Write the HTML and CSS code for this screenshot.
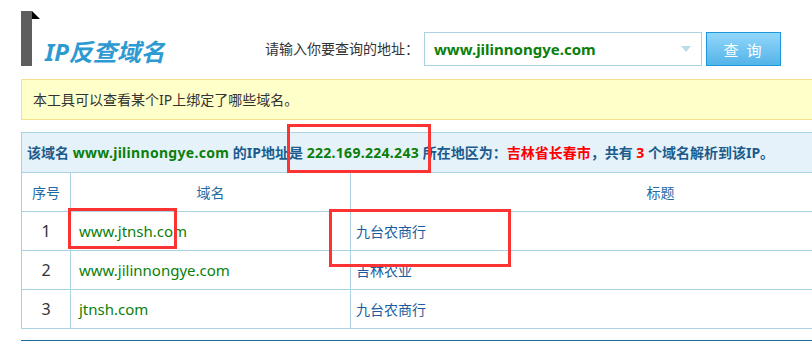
FILE: index.html
```html
<!DOCTYPE html>
<html lang="zh-CN">
<head>
    <meta charset="UTF-8">
    <meta name="viewport" content="width=device-width, initial-scale=1.0">
    <title>IP反查域名</title>
    <link rel="stylesheet" href="styles.css">
</head>
<body>
    <div class="page">
        <div class="header">
            <div class="logo">
                <span class="logo-bar"></span>
                <h1>IP反查域名</h1>
            </div>
            <form class="search">
                <label for="domain">请输入你要查询的地址：</label>
                <div class="combo">
                    <input type="text" id="domain" value="www.jilinnongye.com">
                    <span class="arrow"></span>
                </div>
                <button type="button">查 询</button>
            </form>
        </div>
        <div class="notice">本工具可以查看某个IP上绑定了哪些域名。</div>
        <div class="summary">
            该域名 <span class="green">www.jilinnongye.com</span> 的IP地址是 <span class="green">222.169.224.243</span> 所在地区为：<span class="red">吉林省长春市</span>，共有 <span class="red">3</span> 个域名解析到该IP。
        </div>
        <table class="result">
            <thead>
                <tr><th class="col-no">序号</th><th class="col-domain">域名</th><th>标题</th></tr>
            </thead>
            <tbody>
                <tr><td class="no">1</td><td class="domain">www.jtnsh.com</td><td class="title">九台农商行</td></tr>
                <tr><td class="no">2</td><td class="domain">www.jilinnongye.com</td><td class="title">吉林农业</td></tr>
                <tr><td class="no">3</td><td class="domain">jtnsh.com</td><td class="title">九台农商行</td></tr>
            </tbody>
        </table>
        <div class="footer-line"></div>

        <span class="mark mark-ip"></span>
        <span class="mark mark-domain"></span>
        <span class="mark mark-title"></span>
    </div>
</body>
</html>
```

FILE: styles.css
```css
html, body { overflow: hidden; }
body { margin: 0; padding: 0; background: #fff; font-family: "Noto Sans", "Noto Sans CJK SC", sans-serif; font-size: 14px; color: #333; }
.page { position: relative; width: 950px; margin-left: 21px; }

.header { display: flex; align-items: flex-start; height: 79px; }
.logo { display: flex; align-items: flex-end; padding-top: 11px; width: 244px; }
.logo-bar { position: relative; width: 11px; height: 55px; background: #5e5e5e; }
.logo-bar::after { content: ""; position: absolute; top: 0; left: 11px; border-left: 8px solid #000; border-top: 8px solid transparent; }
.logo h1 { margin: 0 0 0 13px; font-size: 24px; line-height: 28px; font-weight: bold; font-style: italic; color: #2e9ad2; }

.search { display: flex; align-items: center; margin-top: 32px; }
.search label { width: 159px; font-size: 14px; line-height: 34px; color: #333; }
.combo { position: relative; }
.combo input { box-sizing: border-box; width: 278px; height: 34px; padding: 0 0 0 9px; border: 1px solid #a9d3e1; font-family: inherit; font-size: 15px; font-weight: bold; color: #0a7f0a; outline: none; }
.arrow { position: absolute; right: 11px; top: 14px; border-left: 5px solid transparent; border-right: 5px solid transparent; border-top: 6px solid #bcdcec; }
.search button { box-sizing: border-box; width: 75px; height: 34px; margin-left: 4px; border: 1px solid #1b98de; background: linear-gradient(#92d7fb, #54b3e7); color: #fff; font-family: inherit; font-size: 15px; letter-spacing: 2px; cursor: pointer; }

.notice { box-sizing: border-box; height: 41px; padding-left: 11px; border: 1px solid #f6df8e; background: #ffffc9; line-height: 39px; color: #333; }

.summary { box-sizing: border-box; height: 40px; margin-top: 12px; padding-left: 5px; border: 1px solid #a9d3e1; border-bottom: none; background: #e6f2fa; line-height: 40px; font-weight: bold; color: #1c5c8c; white-space: nowrap; }
.green { color: #0a7f0a; letter-spacing: 0.3px; }
.red { color: #f00; }

.result { width: 100%; border-collapse: collapse; }
.result th, .result td { height: 38px; padding: 0; border: 1px solid #a9d3e1; }
.result th { font-weight: normal; color: #1f6aa5; }
.col-no { width: 48px; }
.col-domain { width: 279px; }
.no { text-align: center; font-size: 16px; color: #333; }
.domain { padding-left: 8px !important; font-size: 15px; color: #0a7f0a; }
.title { padding-left: 5px !important; color: #1c5c9c; }

.footer-line { height: 3px; margin-top: 11px; background: #1b6a9b; }

.mark { position: absolute; box-sizing: border-box; border: 3px solid #fb3333; }
.mark-ip { left: 266px; top: 124px; width: 144px; height: 49px; }
.mark-domain { left: 47px; top: 208px; width: 109px; height: 41px; }
.mark-title { left: 308px; top: 209px; width: 182px; height: 58px; }
```
